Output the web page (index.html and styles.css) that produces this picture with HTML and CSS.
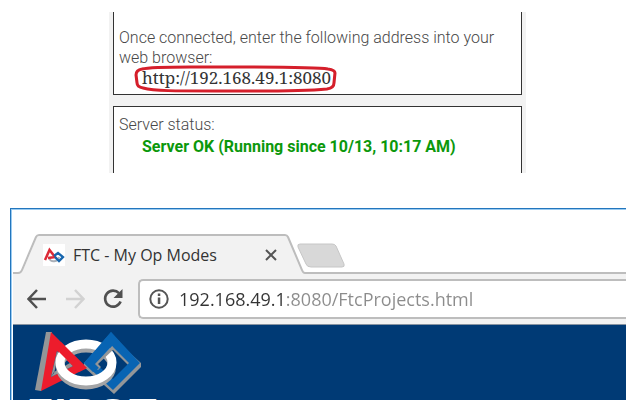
FILE: index.html
```html
<!DOCTYPE html>
<html lang="en">
<head>
<meta charset="utf-8">
<title>FTC - My Op Modes</title>
<link rel="stylesheet" href="styles.css">
</head>
<body>
<section class="panel">
  <div class="card card-address">
    <p class="label">Once connected, enter the following address into your web browser:</p>
    <div class="address">
      <span class="address-text">http://192.168.49.1:8080</span>
      <svg class="ring" viewBox="0 0 200 28" preserveAspectRatio="none" aria-hidden="true"><path d="M8 4C18 1 50 2 90 2S180 2 191 4Q198 5 198 8L197 18Q197 23 190 24C160 27 120 26 80 26S20 26 9 23Q3 22 3 18L2 10Q2 5 8 4Z"/></svg>
    </div>
  </div>
  <div class="card card-status">
    <p class="label">Server status:</p>
    <p class="status">Server OK (Running since 10/13, 10:17 AM)</p>
  </div>
</section>

<section class="browser">
  <div class="tabs">
    <svg class="slant-left" width="26" height="40" viewBox="0 0 26 40" aria-hidden="true"><path class="fill" d="M0 40V39H6Q9 39 10 36L24 3Q25 1 26 1V40Z"/><path fill="#fff" d="M0 0H25L10 36 6 38H0Z"/><path class="edge" d="M0 39H5Q8 39 9 36L23 3Q24 1 26 1"/></svg>
    <div class="tab">
      <svg width="22" height="22" viewBox="0 0 22 22" aria-hidden="true"><path fill="#fff" d="M0 0h22v22H0z"/><path d="M6 14c2 5 9 4 10-1" fill="none" stroke="#aab0b8" stroke-width="2"/><path d="M2 16 6.500 6 12 13 5 14" fill="none" stroke="#dc2936" stroke-width="2.500"/><path d="m11 12 4-3 5 4-4 4-4-4" fill="none" stroke="#1766ae" stroke-width="2.300"/></svg>
      <span class="tab-title">FTC - My Op Modes</span>
      <button class="close" aria-label="Close tab"><svg width="12" height="12" viewBox="0 0 12 12"><path d="m1 1 10 10M11 1 1 11" stroke="#555" stroke-width="2"/></svg></button>
    </div>
    <svg class="slant-right" width="20" height="40" viewBox="0 0 20 40" aria-hidden="true"><path class="fill" d="M0 1Q2 1 3 3L17 36Q18 39 20 39V40H0Z"/><path class="edge" d="M0 1Q2 1 3 3L17 36Q18 39 20 39"/></svg>
    <div class="strip-rest">
      <button class="new-tab" aria-label="New tab"><svg width="48" height="25" viewBox="0 0 48 25"><path d="M3 1H35Q38 1 39 3L47 21Q48 24 45 24H14Q10 24 9 21L1 4Q0 1 3 1Z" fill="#d8d8d8" stroke="#c6c6c6"/></svg></button>
    </div>
  </div>
  <div class="toolbar">
    <button class="nav" aria-label="Back"><svg width="20" height="20" viewBox="0 0 20 20"><path d="M19 10H2M10 1 1.500 10 10 19" fill="none" stroke="#505050" stroke-width="2.500"/></svg></button>
    <button class="nav" aria-label="Forward" disabled><svg width="20" height="20" viewBox="0 0 20 20"><path d="M1 10H18M10 1 18.500 10 10 19" fill="none" stroke="#d2d2d2" stroke-width="2.500"/></svg></button>
    <button class="nav" aria-label="Reload"><svg width="20" height="20" viewBox="0 0 20 20"><path d="M16 4.200A8 8 0 1 0 17.600 12.500" fill="none" stroke="#505050" stroke-width="2.600"/><path d="M19.500 0V9H10.500Z" fill="#505050"/></svg></button>
    <div class="omnibox">
      <svg width="20" height="20" viewBox="0 0 20 20" aria-hidden="true"><circle cx="10" cy="10" r="8.700" fill="none" stroke="#555" stroke-width="2"/><path d="M8.800 4.500h2.500V7H8.800zM8.800 8.500h2.500V15H8.800z" fill="#555"/></svg>
      <input class="url" type="text" aria-label="Address" value="192.168.49.1:8080/FtcProjects.html">
    </div>
  </div>
  <div class="page">
    <svg class="logo" width="108" height="64" viewBox="0 0 108 64" aria-hidden="true">
      <path fill="#949698" d="M11 2 17 2 12 55 6 61 0 60Z"/>
      <path fill="#ed1c2c" fill-rule="evenodd" d="M16 2 52 38 6 61ZM22 21 16 47 38 36Z"/>
      <path fill="#949698" d="m22 21 2 3-5 19-3 4ZM16 47 38 36 35 33 19 42Z"/>
      <path fill="#949698" fill-rule="evenodd" d="M76 6 106 33V37L79 64 49 37V33ZM77 19 61 35 78 52 94 36Z"/>
      <path fill="#0864b3" fill-rule="evenodd" d="M76 2 105 33 78 60 49 33ZM77 16 60 33 78 49 94 33Z"/>
      <ellipse cx="51" cy="37" rx="26" ry="18.500" fill="none" stroke="#a4a5a7" stroke-width="8"/>
      <ellipse cx="51" cy="32.500" rx="26" ry="18.500" fill="none" stroke="#fff" stroke-width="9"/>
      <path fill="#ed1c2c" d="m26 12 26 26-8 4-20-20Z"/>
      <path fill="#949698" d="m77 16-19 19 5 5 3-3-3-3 16-15Z"/>
      <path fill="#0864b3" d="M49 33 76 2 85 12 77 16 60 34 64 38 58 42Z"/>
    </svg>
    <div class="wordmark">FIRST</div>
  </div>
</section>
</body>
</html>
```
FILE: styles.css
```css
* { box-sizing: border-box; }
body { margin: 0; background: #fff; overflow: hidden; }
p { margin: 0; }
button { border: 0; padding: 0; background: none; display: flex; }
svg { display: block; flex: none; }

.panel {
  margin: 12px 110px 0 109px;
  padding: 0 4px;
  background: #f2f2f2;
  font-family: Roboto, sans-serif;
  font-size: 16px;
  line-height: 20px;
}
.card {
  border: 1px solid #333;
  background: #fff;
  padding: 0 5px;
}
.card-address { border-top: 0; padding-top: 16px; padding-bottom: 4px; }
.card-status { border-bottom: 0; margin-top: 11px; padding-top: 8px; padding-bottom: 16px; }
.label { color: #484848; font-weight: 300; }
.address {
  position: relative;
  width: max-content;
  margin-left: 23px;
  padding-bottom: 2px;
  color: #333;
  font-family: "Noto Serif", "Liberation Serif", serif;
  font-size: 17px;
}
.ring {
  position: absolute;
  inset: -3px -8px -2px;
  width: calc(100% + 14px);
  height: 28px;
  fill: none;
  stroke: #d51f2b;
  stroke-width: 3;
}
.status {
  margin-left: 23px;
  padding-top: 2px;
  color: #0b980b;
  font-weight: 700;
}

.browser {
  margin: 35px 10px 0;
  border-top: 1px solid #2376bd;
  border-left: 1px solid #2376bd;
  box-shadow: inset 1px 1px #9acbf1;
  padding: 1px 0 0 2px;
  font-family: "Open Sans", "Noto Sans", sans-serif;
}
.tabs { display: flex; padding-top: 24px; }
.fill { fill: #f2f2f2; }
.edge { fill: none; stroke: #bdbdbd; stroke-width: 2; }
.tab {
  display: flex;
  align-items: center;
  width: 246px;
  height: 40px;
  padding: 0 8px 0 4px;
  border-top: 2px solid #bdbdbd;
  background: #f2f2f2;
}
.tab-title {
  margin-left: 8px;
  color: #333;
  font-size: 16px;
  line-height: 20px;
}
.close { margin-left: auto; }
.strip-rest {
  flex: 1;
  padding: 9px 0 0 0;
  border-bottom: 2px solid #bdbdbd;
}
.new-tab { margin-left: -8px; }
.toolbar {
  display: flex;
  align-items: center;
  padding: 5px 0 5px 14px;
  background: #f2f2f2;
  border-bottom: 1px solid #8793a1;
}
.nav { margin-right: 18px; }
.omnibox {
  flex: 1;
  display: flex;
  align-items: center;
  height: 40px;
  margin-left: -3px;
  padding-left: 9px;
  border: 2px solid #bdbdbd;
  border-right: 0;
  border-radius: 5px 0 0 5px;
  background: #fff;
}
.url {
  flex: 1;
  min-width: 0;
  margin-left: 10px;
  padding: 0;
  border: 0;
  outline: 0;
  font: 18px/24px "Open Sans", "Noto Sans", sans-serif;
  color: transparent;
  background: linear-gradient(to right, #333 107px, #8c8c8c 107px);
  background-clip: text;
  -webkit-background-clip: text;
}
.page {
  height: 75px;
  padding: 5px 0 0 10px;
  overflow: hidden;
  background: #003a75;
}
.logo { margin-left: 12px; }
.wordmark {
  color: #fff;
  font: italic bold 45px/42px "Liberation Sans", sans-serif;
}
```
